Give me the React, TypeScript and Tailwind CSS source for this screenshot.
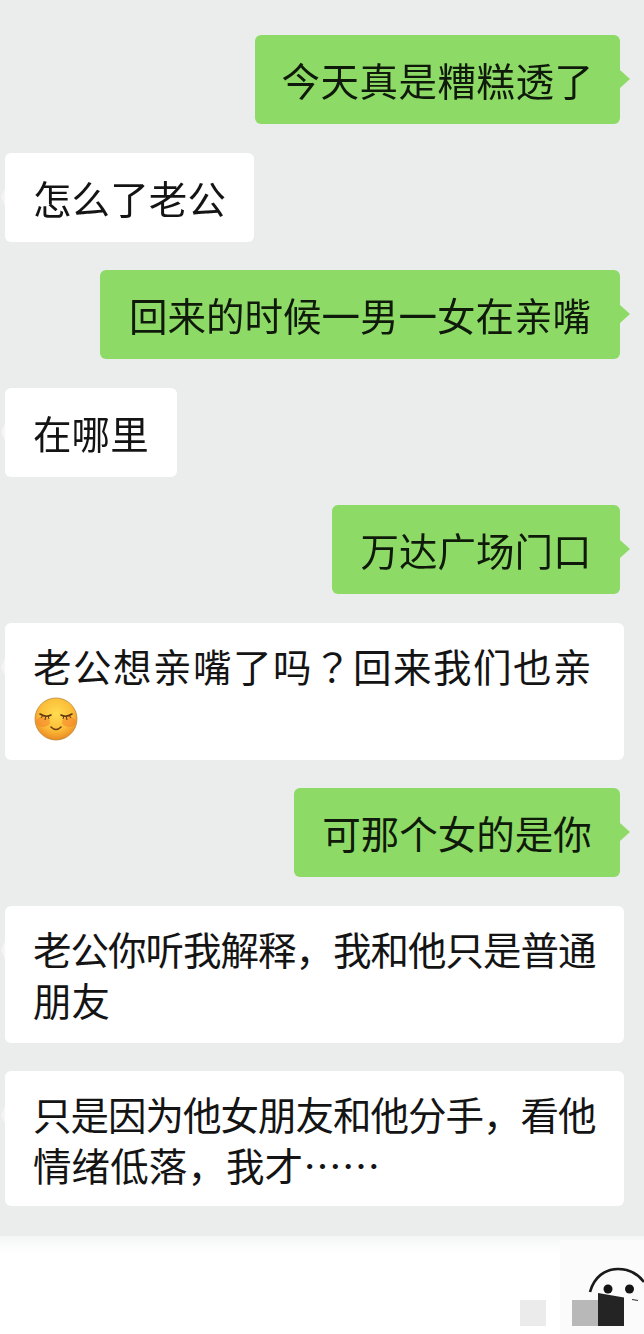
const cjk = "font-['Noto_Sans_CJK_SC','Noto_Sans',sans-serif] font-normal"

function Sent({ text, className }: { text: string; className: string }) {
  return (
    <div className="flex justify-end pr-6">
      <div className={`relative h-[89px] rounded-md bg-[#8ddb66] flex items-center justify-center whitespace-nowrap text-[38.5px] leading-none text-[#0f1a0b] ${className}`}>
        {text}
        <span className="absolute left-full top-[35px] border-y-[9px] border-l-[10px] border-y-transparent border-l-[#8ddb66]" />
      </div>
    </div>
  )
}

function Received({ lines, className }: { lines: string[]; className: string }) {
  return (
    <div className="flex pl-[5px]">
      <div className={`relative rounded-md bg-white pl-[28px] flex flex-col justify-center gap-3 whitespace-nowrap text-[38.5px] leading-[39px] text-[#141414] ${className}`}>
        <span className="absolute right-full top-[35px] border-y-[9px] border-r-[4px] border-y-transparent border-r-[#f4f5f4]" />
        {lines.map((line) => (
          <div key={line} className={line.length > 12 ? 'tracking-[-1px]' : 'tracking-[0.1px]'}>{line}</div>
        ))}
      </div>
    </div>
  )
}

function Emoji() {
  return (
    <svg width="44" height="44" viewBox="0 0 44 44" className="ml-px">
      <defs>
        <radialGradient id="face" cx="50%" cy="38%" r="62%">
          <stop offset="0%" stopColor="#ffdc50" />
          <stop offset="62%" stopColor="#fcbd38" />
          <stop offset="100%" stopColor="#ea8a22" />
        </radialGradient>
      </defs>
      <circle cx="22" cy="22" r="21" fill="url(#face)" stroke="#b98a3c" strokeWidth="0.8" />
      <ellipse cx="9" cy="25" rx="7" ry="5" fill="#f47c2c" opacity="0.5" />
      <ellipse cx="35" cy="25" rx="7" ry="5" fill="#f47c2c" opacity="0.5" />
      <path d="M6 17q6 4 11 1M27 18q5 3 11-1" fill="none" stroke="#5e3510" strokeWidth="1.6" strokeLinecap="round" />
      <path d="M7 21l2-3M11 23l1-4M15 22l-1-3M29 22l1-3M33 23l-1-4M37 21l-2-3" stroke="#5e3510" strokeWidth="1" />
      <path d="M17 30q5 5 10 0" fill="none" stroke="#6b3d12" strokeWidth="1.6" strokeLinecap="round" />
    </svg>
  )
}

export default function App() {
  return (
    <div className={`relative w-[644px] h-[1334px] overflow-hidden bg-[#ebedec] pt-[35px] ${cjk}`}>
      <div className="flex flex-col gap-[28.5px] blur-[0.4px]">
        <Sent text="今天真是糟糕透了" className="w-[365px] tracking-[0.5px]" />
        <Received lines={['怎么了老公']} className="w-[249px] h-[89px]" />
        <Sent text="回来的时候一男一女在亲嘴" className="w-[520px]" />
        <Received lines={['在哪里']} className="w-[172px] h-[89px]" />
        <Sent text="万达广场门口" className="w-[288px]" />
        <div className="flex pl-[5px]">
          <div className="relative w-[619px] h-[137px] rounded-md bg-white pl-[28px] pt-[23px] flex flex-col gap-3 whitespace-nowrap text-[38.5px] leading-[39px] text-[#141414]">
            <span className="absolute right-full top-[35px] border-y-[9px] border-r-[4px] border-y-transparent border-r-[#f4f5f4]" />
            <div className="tracking-[1.5px]">
              老公想亲嘴了吗<span className="font-['Noto_Sans_CJK_JP',sans-serif]">？</span>回来我们也亲
            </div>
            <Emoji />
          </div>
        </div>
        <Sent text="可那个女的是你" className="w-[326px]" />
        <Received lines={['老公你听我解释，我和他只是普通', '朋友']} className="w-[619px] h-[137px]" />
        <Received lines={['只是因为他女朋友和他分手，看他', '情绪低落，我才……']} className="w-[619px] h-[135px]" />
      </div>
      <footer className="absolute inset-x-0 top-[1236px] bottom-0 bg-gradient-to-b from-[#f4f6f5] to-white to-[18%]" />
      <div className="absolute left-[560px] top-[1240px] right-0 bottom-0 bg-[#fafbfa]" />
      <svg width="60" height="46" viewBox="0 0 60 46" className="absolute left-[584px] top-[1262px]">
        <path d="M6 30C10 15 21 7 34 7c11 0 20 5 26 13" fill="none" stroke="#1a1a1a" strokeWidth="2.6" />
        <circle cx="24" cy="27" r="4.5" fill="#141414" />
        <circle cx="45.5" cy="27" r="4.5" fill="#141414" />
        <path d="M48 37.5l6 1" stroke="#333" strokeWidth="1.2" />
      </svg>
      <div className="absolute left-[520px] top-[1300px] w-[26px] h-[26px] bg-[#ebebeb]" />
      <div className="absolute left-[572px] top-[1300px] w-[26px] h-[26px] bg-[#b8b8b8]" />
      <div className="absolute left-[598px] top-[1293px] w-[26px] h-[33px] bg-[#242424] [clip-path:polygon(0_0,100%_14%,100%_100%,0_100%)]" />
    </div>
  )
}
